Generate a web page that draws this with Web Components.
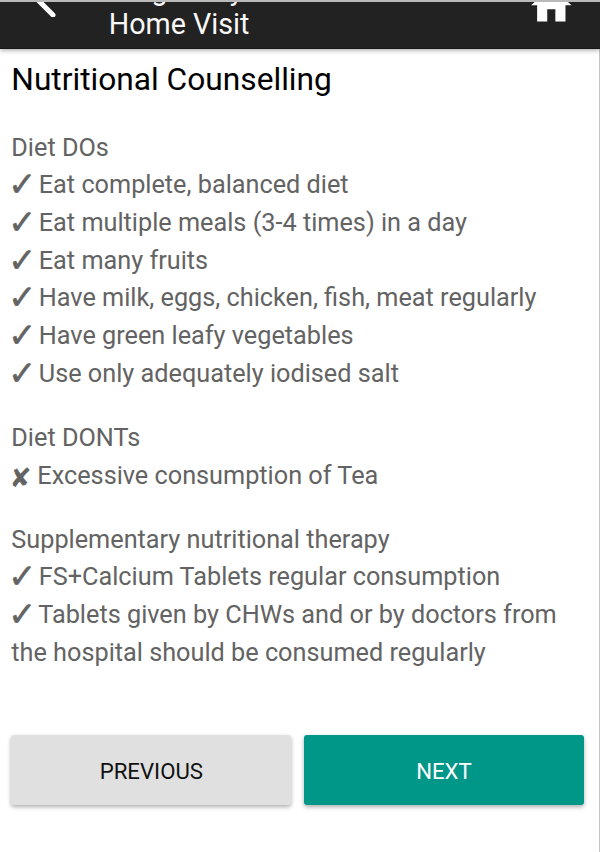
<!DOCTYPE html>
<html lang="en">
<head>
<meta charset="utf-8">
<title>Home Visit</title>
<style>
html,body{margin:0;height:100%;background:#fff;overflow:hidden}
body{font-family:Roboto,"Liberation Sans",sans-serif}
</style>
</head>
<body>
<visit-screen>
  <app-header slot="header">Pregnancy<br>Home Visit</app-header>
  <page-title>Nutritional Counselling</page-title>
  <advice-section>
    <advice-line>Diet DOs</advice-line>
    <advice-line mark="do">Eat complete, balanced diet</advice-line>
    <advice-line mark="do">Eat multiple meals (3-4 times) in a day</advice-line>
    <advice-line mark="do">Eat many fruits</advice-line>
    <advice-line mark="do">Have milk, eggs, chicken, fish, meat regularly</advice-line>
    <advice-line mark="do">Have green leafy vegetables</advice-line>
    <advice-line mark="do">Use only adequately iodised salt</advice-line>
  </advice-section>
  <advice-section>
    <advice-line>Diet DONTs</advice-line>
    <advice-line mark="dont">Excessive consumption of Tea</advice-line>
  </advice-section>
  <advice-section>
    <advice-line>Supplementary nutritional therapy</advice-line>
    <advice-line mark="do">FS+Calcium Tablets regular consumption</advice-line>
    <advice-line mark="do">Tablets given by CHWs and or by doctors from the hospital should be consumed regularly</advice-line>
  </advice-section>
  <nav-button slot="actions">PREVIOUS</nav-button>
  <nav-button slot="actions" primary>NEXT</nav-button>
</visit-screen>
<script>
const define = (name, html) => customElements.define(name, class extends HTMLElement {
  constructor() {
    super();
    this.attachShadow({mode: 'open'}).innerHTML = typeof html === 'function' ? html(this) : html;
  }
});

define('visit-screen', `<style>
:host{display:flex;flex-direction:column;box-sizing:border-box;height:852px;border-top:2px solid #bababa}
main{flex:1;box-sizing:border-box;border-right:1px solid #c4c4c4;padding:10.7px 15px 0 11.3px}
.sections{display:flex;flex-direction:column;gap:26.4px}
.actions{display:grid;grid-template-columns:1fr 1fr;gap:12.5px;margin-top:63px}
</style>
<slot name="header"></slot>
<main><div class="sections"><slot></slot></div><div class="actions"><slot name="actions"></slot></div></main>`);

define('app-header', `<style>
:host{display:flex;align-items:flex-end;box-sizing:border-box;height:47px;flex:none;position:relative;background:#222;color:#f8f8f8;border-bottom:1px solid #181818;box-shadow:0 1px 5px rgba(0,0,0,.38);clip-path:inset(0 0 -8px 0)}
.title{flex:1;margin-left:52px;padding-bottom:6.6px;font-size:28.7px;line-height:34px}
svg{display:block;flex:none}
.back{width:24px;height:34px;margin:0 0 31px 32.7px}
.home{width:48.6px;height:48.6px;margin:0 24.7px 18.4px 0}
</style>
<svg class="back" viewBox="0 0 24 34"><path d="M20 2 5 17 20 32" fill="none" stroke="#fff" stroke-width="5" stroke-linecap="round" stroke-linejoin="round"/></svg>
<div class="title"><slot></slot></div>
<svg class="home" viewBox="0 0 24 24"><path d="M10 20v-6h4v6h5v-8h3L12 3 2 12h3v8z" fill="#fff"/></svg>`);

define('page-title', `<style>
:host{display:block;font-size:31.7px;line-height:40px;color:#000;margin-bottom:2.5px}
</style><slot></slot>`);

define('advice-section', `<style>:host{display:block}</style><slot></slot>`);

define('advice-line', el => {
  const mark = el.getAttribute('mark');
  const glyph = mark === 'do' ? '✓' : mark === 'dont' ? '✘' : '';
  return `<style>
:host{display:block;font-size:25.25px;line-height:37.7px;color:#636363}
.mark{display:inline-block;height:0;line-height:0;font-family:"DejaVu Sans",sans-serif;white-space:nowrap}
.do{width:24.6px;margin-left:-3.4px;font-size:34px;vertical-align:-3px;-webkit-text-stroke:.5px #636363}
.dont{width:21.1px;margin-left:-1.8px;margin-right:.5px;font-size:26.5px;vertical-align:-3px}
</style>${glyph ? `<span class="mark ${mark}">${glyph}</span> ` : ''}<slot></slot>`;
});

define('nav-button', `<style>
:host{display:flex;align-items:center;justify-content:center;box-sizing:border-box;height:70.5px;padding-top:1.6px;border-radius:3px;background:#e0e0e0;color:#111;font-size:22.2px;box-shadow:0 2px 4px rgba(0,0,0,.32)}
:host([primary]){background:#009688;color:#fff}
</style><slot></slot>`);
</script>
</body>
</html>
